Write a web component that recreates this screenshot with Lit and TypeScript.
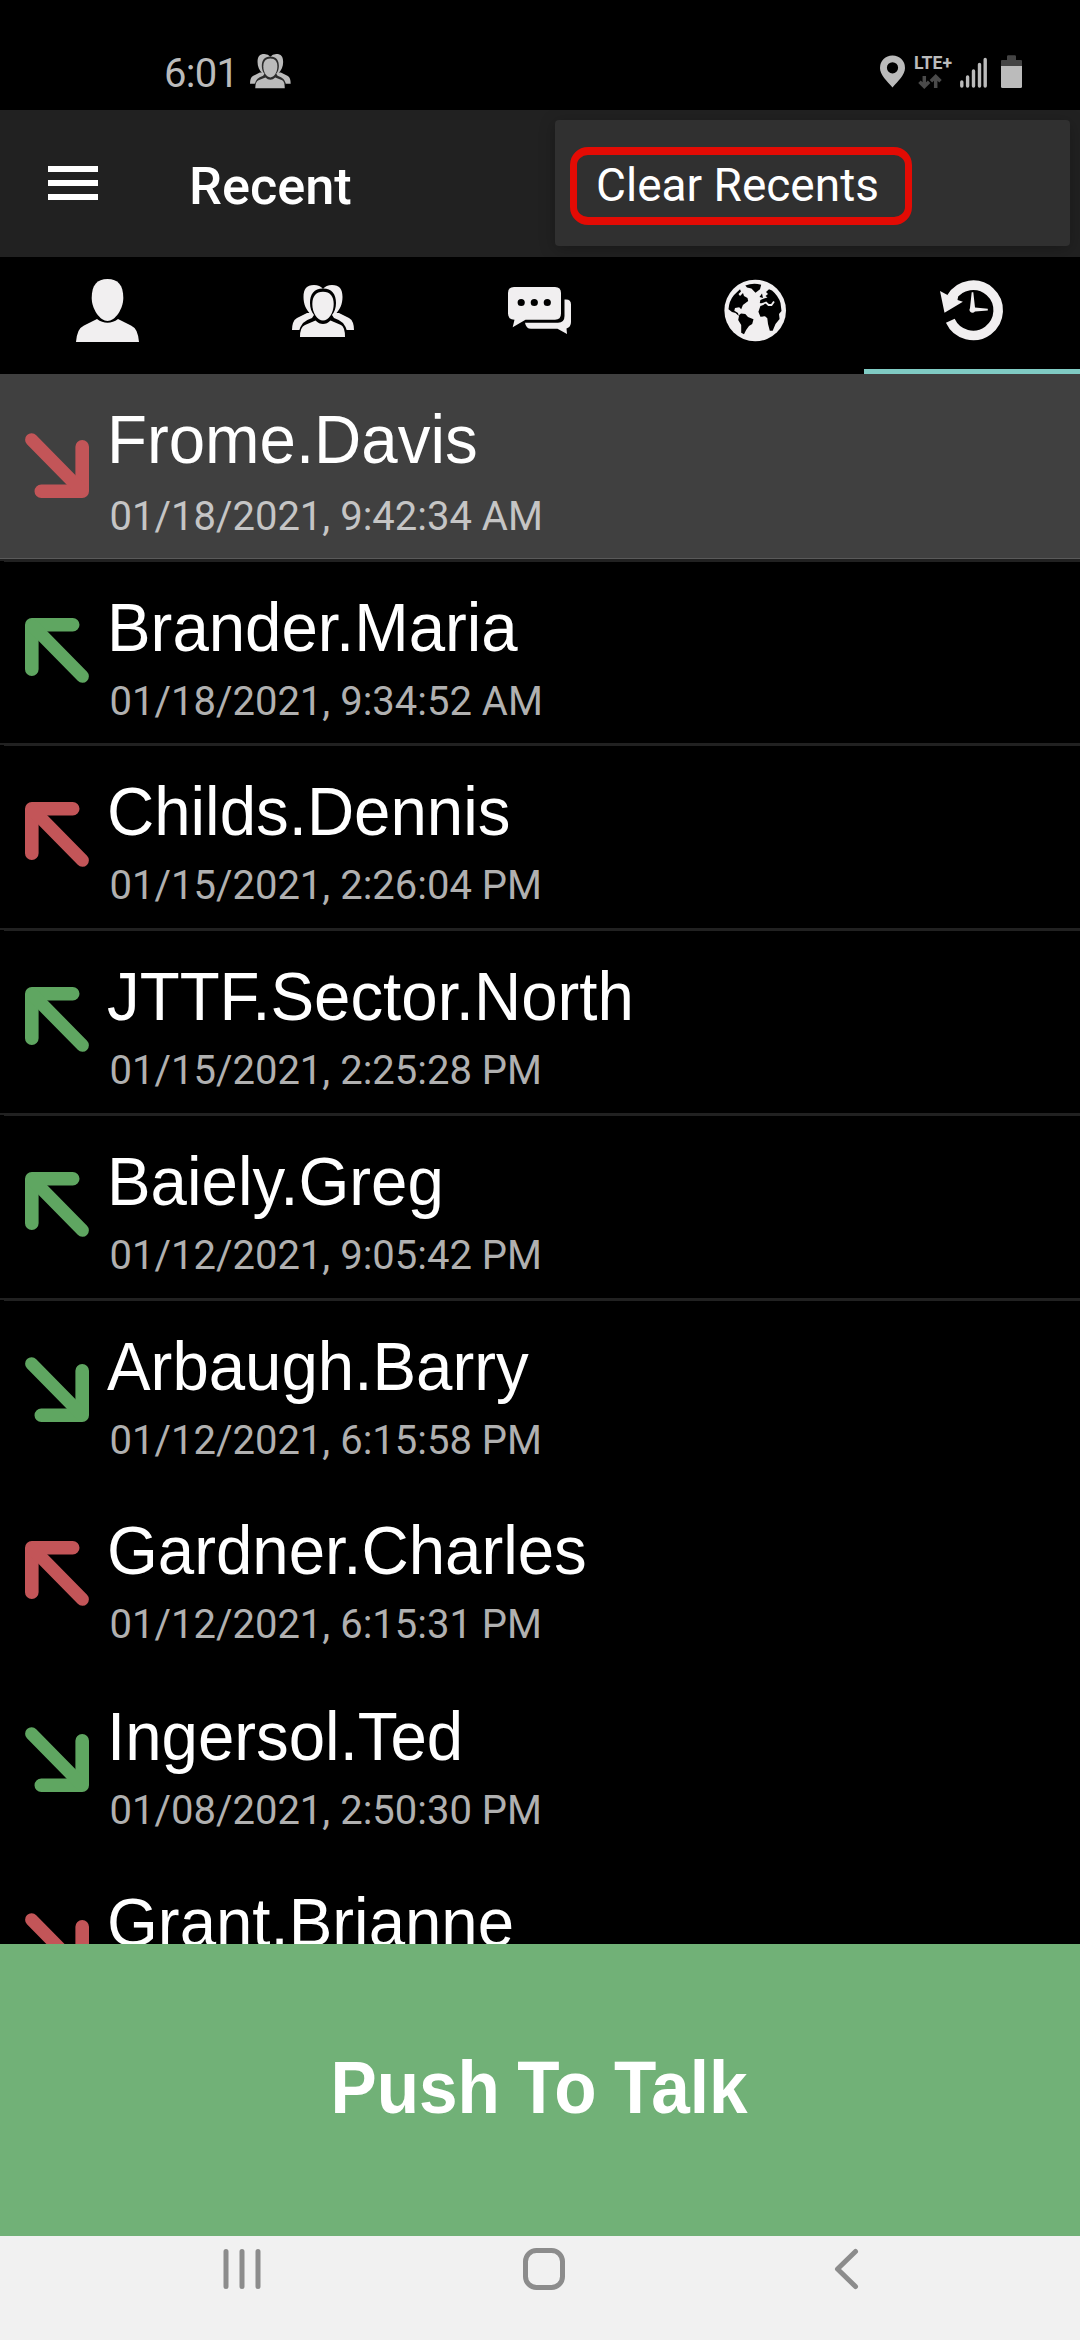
import { LitElement, html, css, svg } from "lit";
import { customElement, property } from "lit/decorators.js";
import { classMap } from "lit/directives/class-map.js";

interface Call {
  name: string;
  time: string;
  incoming: boolean;
  missed: boolean;
}

const CALLS: Call[] = [
  { name: "Frome.Davis", time: "01/18/2021, 9:42:34 AM", incoming: true, missed: true },
  { name: "Brander.Maria", time: "01/18/2021, 9:34:52 AM", incoming: false, missed: false },
  { name: "Childs.Dennis", time: "01/15/2021, 2:26:04 PM", incoming: false, missed: true },
  { name: "JTTF.Sector.North", time: "01/15/2021, 2:25:28 PM", incoming: false, missed: false },
  { name: "Baiely.Greg", time: "01/12/2021, 9:05:42 PM", incoming: false, missed: false },
  { name: "Arbaugh.Barry", time: "01/12/2021, 6:15:58 PM", incoming: true, missed: false },
  { name: "Gardner.Charles", time: "01/12/2021, 6:15:31 PM", incoming: false, missed: true },
  { name: "Ingersol.Ted", time: "01/08/2021, 2:50:30 PM", incoming: true, missed: false },
  { name: "Grant.Brianne", time: "", incoming: true, missed: true },
];

// Three people in a 62 x 52 box; `gap` colours the outline round the front figure.
const groupShape = (gap: string) => svg`
  <path d="M22 0C14.500 0 11.500 4 11.500 12C11.500 19 14 25 19 29.500H43C48 25 50.500 19 50.500 12C50.500 4 47.500 0 40 0Q34 0 31 4Q28 0 22 0Z"/>
  <path d="M15 28L5 33Q2 34.500 1 38Q0 41 0 45H62Q62 41 61 38Q60 34.500 57 33L47 28Z"/>
  <path fill=${gap} d="M31 3.500C22 3.500 18 9 18 18C18 23 19.500 27 22 30L20 33Q14 35 11 38Q8.500 41 7 46H55Q53.500 41 51 38Q48 35 42 33L40 30C42.500 27 44 23 44 18C44 9 40 3.500 31 3.500Z"/>
  <path d="M31 6.700C24 6.700 20.300 11 20.300 19C20.300 28 25.500 35.500 31 35.500S41.700 28 41.700 19C41.700 11 38 6.700 31 6.700Z"/>
  <path d="M23.500 35.500L13 40Q8 42 8 52H53Q53 42 49 40L38.500 35.500Q35 39 31 39T23.500 35.500Z"/>
`;

@customElement("call-arrow")
export class CallArrow extends LitElement {
  @property({ type: Boolean }) incoming = false;
  @property({ type: Boolean }) missed = false;

  static styles = css`
    :host { display: block; width: 64px; height: 65px; color: #5fa661; }
    svg { display: block; }
    .missed { color: #c35558; }
    .incoming { transform: rotate(180deg); }
  `;

  render() {
    return html`<svg
      class=${classMap({ incoming: this.incoming, missed: this.missed })}
      width="64" height="65" viewBox="0 0 64 65"
      fill="none" stroke="currentColor" stroke-width="13.6"
      stroke-linecap="round" stroke-linejoin="round">
      <path d="M6.800 51.200V6.800H47.700"/>
      <path stroke-width="13" d="M8 8L57.400 58.300"/>
    </svg>`;
  }
}

@customElement("tab-bar")
export class TabBar extends LitElement {
  static styles = css`
    :host { display: grid; grid-template-columns: repeat(5, 1fr); height: 117px; background: #000; }
    .tab { height: 117px; box-sizing: border-box; }
    .active { border-bottom: 5px solid #80cbc4; }
    svg { display: block; fill: #f1eff0; }
  `;

  render() {
    return html`
      <div class="tab">
        <svg width="216" height="112" viewBox="0 257 216 112">
          <path d="M107.500 279C97 279 91.700 285 91.700 298C91.700 309 100 321 107.500 321S123.300 309 123.300 298C123.300 285 118 279 107.500 279Z"/>
          <path d="M97 319L84 325.500Q80 327.500 78.500 331Q76.300 336 76 342H139Q138.700 336 136.500 331Q135 327.500 131 325.500L118 319Q113 322.800 107.500 322.800T97 319Z"/>
        </svg>
      </div>
      <div class="tab">
        <svg width="216" height="112" viewBox="216 257 216 112">
          <g transform="translate(292 285)">${groupShape("#000")}</g>
        </svg>
      </div>
      <div class="tab">
        <svg width="216" height="112" viewBox="432 257 216 112">
          <path d="M564.500 299.500H566Q571 299.500 571 304.500V322Q571 327 566.500 328.500L567 334L557.500 328.700H531Q526 328.700 525 322.700H558Q564.500 322.700 564.500 316Z"/>
          <path fill-rule="evenodd" d="M514 287H555Q561 287 561 293V313.500Q561 319.700 555 319.700H525.500L512.700 327.300L514.500 319.700Q508 319.700 508 313.500V293Q508 287 514 287Z
            M517.600 302.500a3.600 3.600 0 1 0 7.200 0a3.600 3.600 0 1 0 -7.200 0Z
            M530.700 302.500a3.600 3.600 0 1 0 7.200 0a3.600 3.600 0 1 0 -7.200 0Z
            M543.700 302.500a3.600 3.600 0 1 0 7.200 0a3.600 3.600 0 1 0 -7.200 0Z"/>
        </svg>
      </div>
      <div class="tab">
        <svg width="216" height="112" viewBox="648 257 216 112">
          <circle cx="755.200" cy="310.500" r="30.800"/>
          <g fill="#000">
            <path d="M745.300 285.500Q753 282.500 761.200 284.700L760 289.300L755.500 292.700L751.400 288.500L747 287.500Z"/>
            <path d="M740 289.300L734 295Q729 301 728.500 309.300L732 312L735.500 313L738.800 316L738 313L734.300 310.700L735 308L739.200 307.300L741.200 309.300L742.900 305L748.200 301L747.500 298L744 296L743 293L740 296L738.500 294L741 291.500Z"/>
            <path d="M739.200 315L741 313.500L745.300 314L748 317L753.500 319.300L752.200 324L749 326L746.100 330L744 334.300L741.200 332.700V325L738.200 320Z"/>
            <path d="M769 289.300L772 290.500Q778.500 296 780.500 303L781.500 311L779 314L779.600 319L775.500 324L772.700 330.700L769.800 330.700L768 324L767.300 318.300L765 316.300L760.400 316.700L758.400 311.700L760.400 306L764.500 304.500L759.800 303L760.400 300L764 298.500L767.500 297.500L765.500 296L768 294L766 292Z"/>
            <path d="M759.500 297L762 293.500L763 298Z"/>
          </g>
          <path fill="none" stroke="#f1eff0" stroke-width="1.800" d="M761 304.500L766 302.500L768.500 305L771.500 305L774 301.500"/>
        </svg>
      </div>
      <div class="tab active">
        <svg width="216" height="112" viewBox="864 257 216 112">
          <path fill="none" stroke="#f1eff0" stroke-width="9.600" d="M950.300 320.800A25.100 25.100 0 1 0 951.500 297.500"/>
          <path d="M940 291L947.500 295L958 297L957.500 300L962.900 301.700L944.500 312.700Z"/>
          <path d="M971.700 292.300H973.300L975 307.500L987.800 308.700V310.500L975 311.500Q972.500 314 970 311.500Q968.800 310 970 308Z"/>
        </svg>
      </div>
    `;
  }
}

@customElement("app-root")
export class AppRoot extends LitElement {
  static styles = css`
    :host {
      display: flex;
      flex-direction: column;
      width: 1080px;
      height: 2340px;
      overflow: hidden;
      background: #000;
      color: #fff;
      font-family: Roboto, "Liberation Sans", sans-serif;
    }
    svg { display: block; }
    .status {
      display: flex;
      align-items: flex-start;
      height: 110px;
      box-sizing: border-box;
      padding: 50px 56px 0 164px;
      color: #bbb;
      fill: #bbb;
      flex: none;
    }
    .clock { padding-top: 1px; font-size: 40px; line-height: 46px; width: 86px; letter-spacing: -0.7px; }
    .people { margin-top: 4px; }
    .system { margin-left: auto; }
    .lte { font-size: 18px; font-weight: 700; }
    .header {
      display: flex;
      align-items: flex-start;
      height: 147px;
      background: #212121;
      flex: none;
    }
    .burger {
      display: flex;
      flex-direction: column;
      gap: 8.500px;
      padding: 56px 0 0 48px;
      width: 141px;
    }
    .burger span { width: 50px; height: 5.500px; background: #fff; }
    .title {
      margin: 0;
      padding-top: 46px;
      font-size: 52.300px;
      line-height: 60px;
      font-weight: 500;
    }
    .menu {
      display: flex;
      align-items: flex-start;
      box-sizing: border-box;
      width: 515px;
      height: 126px;
      margin: 10px 10px 0 auto;
      padding: 27px 0 0 15px;
      background: #303030;
      border-radius: 4px;
      box-shadow: 0 3px 16px rgba(0, 0, 0, 0.25);
    }
    .item {
      box-sizing: border-box;
      width: 342px;
      height: 78px;
      padding-left: 19px;
      border: 7px solid #e30b04;
      border-top-width: 8px;
      border-bottom-width: 8px;
      border-radius: 18px;
      font-size: 46px;
      line-height: 61px;
      white-space: nowrap;
    }
    .list {
      display: grid;
      grid-template-rows: 185px 184px 185px 185px 185px 184px 186px 186px 186px;
      height: 1570px;
      overflow: hidden;
      flex: none;
    }
    .row {
      display: flex;
      align-items: flex-start;
      padding-left: 25px;
      gap: 18px;
    }
    .ruled {
      background:
        linear-gradient(#212121, #212121) 4px 0 / 100% 3px no-repeat,
        linear-gradient(#212121, #212121) 0 0 / 4px 2px no-repeat;
    }
    .selected { background: #404040; box-shadow: inset 0 -1px #5a5a5a; }
    .selected .time { color: #c5c5c5; }
    .selected .name { padding-top: 29px; height: 88px; transform-origin: 0 90px; }
    call-arrow { margin-top: 59px; }
    .name {
      padding-top: 32px;
      height: 85px;
      font-family: "Liberation Sans", Arial, sans-serif;
      font-size: 65.400px;
      line-height: 76px;
      white-space: nowrap;
      transform: scaleY(1.04);
      transform-origin: 0 93px;
    }
    .time {
      padding-left: 2.500px;
      font-size: 40px;
      line-height: 52px;
      color: #b0b0b0;
      white-space: nowrap;
    }
    .talk {
      display: flex;
      justify-content: center;
      align-items: center;
      height: 292px;
      flex: none;
      border: 0;
      padding: 0 2px 0 0;
      background: #71b177;
      color: #fff;
      font: 700 69.300px/80px "Liberation Sans", Arial, sans-serif;
      word-spacing: -2px;
    }
    .talk span { display: block; transform: translateY(-1px) scaleY(1.08); transform-origin: 0 64px; }
    .nav { height: 104px; background: #f1f1f1; flex: none; }
  `;

  render() {
    return html`
      <div class="status">
        <span class="clock">6:01</span>
        <svg class="people" width="42" height="35" viewBox="0 0 64 53">${groupShape("#2c2c2c")}</svg>
        <svg class="system" width="164" height="44" viewBox="860 50 164 44">
          <path fill-rule="evenodd" d="M892.500 55.500A12.300 12.300 0 0 0 880 68C880 75 887 81 892.500 87.500C898 81 905 75 905 68A12.300 12.300 0 0 0 892.500 55.500ZM892.500 62.200a5.600 5.600 0 1 1 0 11.200a5.600 5.600 0 1 1 0-11.200Z"/>
          <text class="lte" x="914" y="69" textLength="38" lengthAdjust="spacingAndGlyphs">LTE+</text>
          <g fill="none" stroke="#4a4a4a" stroke-width="3.500">
            <path d="M924.300 76V86.500M919.500 81.800L924.300 86.600L929.100 81.800"/>
            <path d="M935.700 88V77M930.900 81.200L935.700 76.400L940.500 81.200"/>
          </g>
          <g stroke="#bbb" stroke-width="3.400" stroke-linecap="round">
            <path d="M961.800 82V86M967.600 77V86M973.500 71V86M979.500 64.500V86M985.200 59.500V86"/>
          </g>
          <path fill="#444" d="M1007 60V56.500Q1007 55.300 1008.200 55.300H1014.800Q1016 55.300 1016 56.500V60H1021Q1022 60 1022 61V66H1001V61Q1001 60 1002 60Z"/>
          <path d="M1001 66H1022V86.500Q1022 88 1020.500 88H1002.500Q1001 88 1001 86.500Z"/>
        </svg>
      </div>

      <div class="header">
        <div class="burger"><span></span><span></span><span></span></div>
        <h1 class="title">Recent</h1>
        <div class="menu"><div class="item">Clear Recents</div></div>
      </div>

      <tab-bar></tab-bar>

      <div class="list">
        ${CALLS.map(
          (c, i) => html`
            <div class=${classMap({ row: true, selected: i === 0, ruled: i > 0 && i < 6 })}>
              <call-arrow ?incoming=${c.incoming} ?missed=${c.missed}></call-arrow>
              <div>
                <div class="name">${c.name}</div>
                <div class="time">${c.time}</div>
              </div>
            </div>
          `
        )}
      </div>

      <button class="talk"><span>Push To Talk</span></button>

      <div class="nav">
        <svg width="1080" height="104" viewBox="0 2236 1080 104" fill="none" stroke="#8c8c8c" stroke-width="5" stroke-linecap="round">
          <path d="M226 2251.500V2286.500M242 2251.500V2286.500M258 2251.500V2286.500"/>
          <rect x="525.500" y="2250.500" width="37" height="37" rx="11"/>
          <path stroke-linejoin="round" d="M855.500 2251.500L837.500 2269L855.500 2286.500"/>
        </svg>
      </div>
    `;
  }
}
